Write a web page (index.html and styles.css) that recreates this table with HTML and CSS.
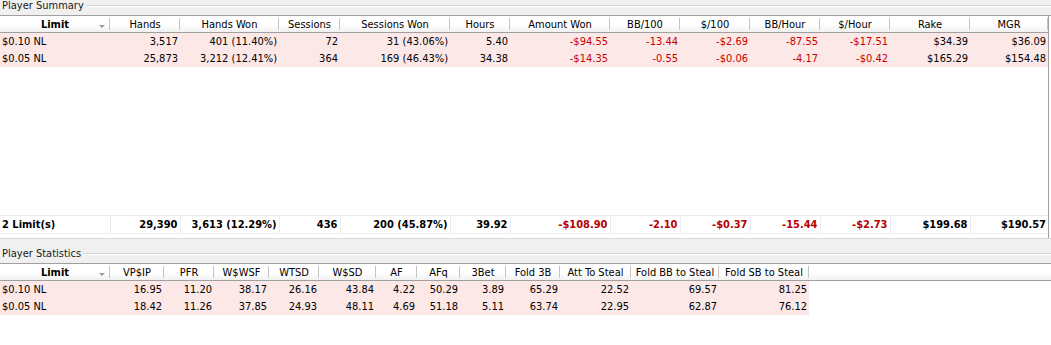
FILE: index.html
```html
<!DOCTYPE html>
<html>
<head>
<meta charset="utf-8">
<link rel="stylesheet" href="styles.css">
</head>
<body>
<div class="band band-top"><span class="caption">Player Summary</span></div>
<div class="summary">
  <table class="grid grid-sum">
    <colgroup>
      <col style="width:110px"><col style="width:70px"><col style="width:99px"><col style="width:61px"><col style="width:110px"><col style="width:60px"><col style="width:100px"><col style="width:70px"><col style="width:70px"><col style="width:70px"><col style="width:70px"><col style="width:80px"><col style="width:78px">
    </colgroup>
    <thead>
      <tr><th class="sortcol"><b>Limit</b><span class="sort"></span></th><th>Hands</th><th>Hands Won</th><th>Sessions</th><th>Sessions Won</th><th>Hours</th><th>Amount Won</th><th>BB/100</th><th>$/100</th><th>BB/Hour</th><th>$/Hour</th><th>Rake</th><th>MGR</th></tr>
    </thead>
    <tbody>
      <tr><td class="l">$0.10 NL</td><td>3,517</td><td>401 (11.40%)</td><td>72</td><td>31 (43.06%)</td><td>5.40</td><td class="neg">-$94.55</td><td class="neg">-13.44</td><td class="neg">-$2.69</td><td class="neg">-87.55</td><td class="neg">-$17.51</td><td>$34.39</td><td>$36.09</td></tr>
      <tr><td class="l">$0.05 NL</td><td>25,873</td><td>3,212 (12.41%)</td><td>364</td><td>169 (46.43%)</td><td>34.38</td><td class="neg">-$14.35</td><td class="neg">-0.55</td><td class="neg">-$0.06</td><td class="neg">-4.17</td><td class="neg">-$0.42</td><td>$165.29</td><td>$154.48</td></tr>
    </tbody>
  </table>
  <div class="spacer"></div>
  <table class="grid totals">
    <colgroup>
      <col style="width:110px"><col style="width:70px"><col style="width:99px"><col style="width:61px"><col style="width:110px"><col style="width:60px"><col style="width:100px"><col style="width:70px"><col style="width:70px"><col style="width:70px"><col style="width:70px"><col style="width:80px"><col style="width:78px">
    </colgroup>
    <tr><td class="l">2 Limit(s)</td><td>29,390</td><td>3,613 (12.29%)</td><td>436</td><td>200 (45.87%)</td><td>39.92</td><td class="neg">-$108.90</td><td class="neg">-2.10</td><td class="neg">-$0.37</td><td class="neg">-15.44</td><td class="neg">-$2.73</td><td>$199.68</td><td>$190.57</td></tr>
  </table>
</div>
<div class="band"><span class="caption">Player Statistics</span></div>
<table class="grid grid-stats">
  <colgroup>
    <col style="width:110px"><col style="width:54px"><col style="width:50px"><col style="width:55px"><col style="width:50px"><col style="width:57px"><col style="width:41px"><col style="width:43px"><col style="width:46px"><col style="width:54px"><col style="width:71px"><col style="width:88px"><col style="width:90px"><col>
  </colgroup>
  <thead>
    <tr><th class="sortcol"><b>Limit</b><span class="sort"></span></th><th>VP$IP</th><th>PFR</th><th>W$WSF</th><th>WTSD</th><th>W$SD</th><th>AF</th><th>AFq</th><th>3Bet</th><th>Fold 3B</th><th>Att To Steal</th><th>Fold BB to Steal</th><th>Fold SB to Steal</th><th class="fill"></th></tr>
  </thead>
  <tbody>
    <tr><td class="l">$0.10 NL</td><td>16.95</td><td>11.20</td><td>38.17</td><td>26.16</td><td>43.84</td><td>4.22</td><td>50.29</td><td>3.89</td><td>65.29</td><td>22.52</td><td>69.57</td><td>81.25</td><td class="fill"></td></tr>
    <tr><td class="l">$0.05 NL</td><td>18.42</td><td>11.26</td><td>37.85</td><td>24.93</td><td>48.11</td><td>4.69</td><td>51.18</td><td>5.11</td><td>63.74</td><td>22.95</td><td>62.87</td><td>76.12</td><td class="fill"></td></tr>
  </tbody>
</table>
</body>
</html>
```

FILE: styles.css
```css
html, body {
  margin: 0;
  padding: 0;
  background: #ffffff;
  overflow: hidden;
}
body {
  font-family: "DejaVu Sans Condensed", "Liberation Sans", sans-serif;
  font-size: 11px;
  color: #000;
  width: 1051px;
  height: 345px;
}
.band {
  height: 24px;
  border-top: 1px solid #d8d8d8;
  border-bottom: 1px solid #a0a0a0;
  background: linear-gradient(#f0f0f0 0, #f0f0f0 14px, #d5d5d5 14px, #d5d5d5 15px, #ffffff 15px, #ffffff 16px, #f0f0f0 16px);
  display: flex;
  align-items: flex-start;
}
.band-top {
  margin-top: -10px;
}
.caption {
  background: #f0f0f0;
  line-height: 13px;
  margin-top: 8px;
  padding: 0 2px 0 2px;
  color: #1a1a1a;
}
.summary {
  height: 222px;
  width: 1048px;
  border-right: 1px solid #a0a0a0;
  display: flex;
  flex-direction: column;
}
.spacer {
  flex: 1;
}
.grid {
  border-collapse: collapse;
  table-layout: fixed;
}
.grid-sum, .totals {
  width: 1048px;
}
.grid-stats {
  width: 1051px;
}
.grid th {
  height: 16px;
  padding: 1px 0 0 0;
  box-sizing: border-box;
  font-weight: normal;
  text-align: center;
  white-space: nowrap;
  overflow: hidden;
  line-height: 15px;
  background:
    linear-gradient(#c3c3c3, #c3c3c3) right center / 1px 12px no-repeat,
    linear-gradient(#ffffff 0, #ffffff 55%, #f1f1f1 100%);
  border-bottom: 1px solid #a0a0a0;
}
.grid th.fill {
  background: linear-gradient(#ffffff 0, #ffffff 55%, #f1f1f1 100%);
}
.sortcol {
  position: relative;
}
.sort {
  position: absolute;
  right: 5px;
  top: 9px;
  width: 0;
  height: 0;
  border-left: 3px solid transparent;
  border-right: 3px solid transparent;
  border-top: 3px solid #9a9a9a;
}
.grid td {
  height: 17px;
  box-sizing: border-box;
  padding: 1px 2px 0 2px;
  line-height: 16px;
  text-align: right;
  white-space: nowrap;
  overflow: hidden;
  background: #fde8e8;
}
.grid td.l {
  text-align: left;
}
.grid td.neg {
  color: #c80000;
}
.grid td.fill {
  background: #ffffff;
}
.totals {
  border-top: 1px solid #ececec;
  border-bottom: 1px solid #ececec;
  margin-bottom: 4px;
}
.totals td {
  background: #ffffff;
  font-weight: bold;
  border-left: 1px solid #ececec;
}
.totals td:first-child {
  border-left: none;
}
.totals td.neg {
  color: #b80000;
}
```
